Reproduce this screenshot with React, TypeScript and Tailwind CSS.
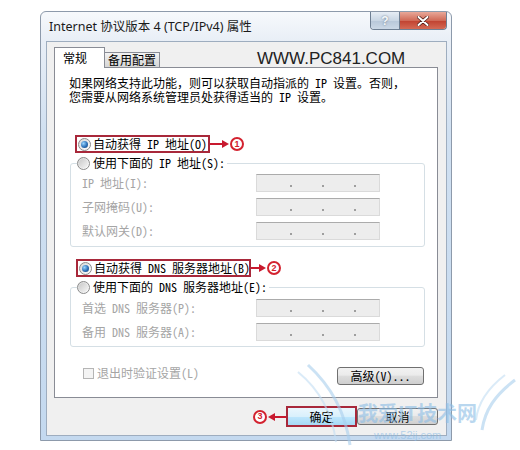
import React from "react";

function Radio({ checked }: { checked?: boolean }) {
  return (
    <span className="flex h-[13px] w-[13px] shrink-0 items-center justify-center rounded-full border border-[#8b8b8b] bg-[linear-gradient(135deg,#d6d6d6,#ffffff)]">
      {checked ? (
        <span className="h-[7px] w-[7px] rounded-full bg-[radial-gradient(circle_at_35%_35%,#9ad6ff_0%,#2c70b8_55%,#15406f_100%)]" />
      ) : (
        <span className="h-[9px] w-[9px] rounded-full bg-[linear-gradient(135deg,#c9c9c9,#f5f5f5)]" />
      )}
    </span>
  );
}

function Num({ n }: { n: string }) {
  return (
    <span className="flex h-[14px] w-[14px] shrink-0 items-center justify-center rounded-full border-2 border-[#d3222f] bg-white text-[9px] font-bold leading-none text-[#d3222f] [font-family:'Liberation_Sans',sans-serif]">
      {n}
    </span>
  );
}

function ArrowRight({ w }: { w: number }) {
  return (
    <svg width={w} height="10" viewBox={`0 0 ${w} 10`} className="shrink-0">
      <line x1="0" y1="5" x2={w - 6} y2="5" stroke="#c8192e" strokeWidth="2" />
      <polygon points={`${w - 8},1 ${w - 1},5 ${w - 8},9`} fill="#c8192e" />
    </svg>
  );
}

function ArrowLeft({ w }: { w: number }) {
  return (
    <svg width={w} height="10" viewBox={`0 0 ${w} 10`} className="shrink-0">
      <line x1="6" y1="5" x2={w} y2="5" stroke="#c8192e" strokeWidth="2" />
      <polygon points="8,1 1,5 8,9" fill="#c8192e" />
    </svg>
  );
}

function IpBox() {
  return (
    <div className="flex h-[18px] w-[124px] shrink-0 items-end gap-[30px] border border-[#dadada] border-t-[#ababab] bg-[#ededed] pb-[4px] pl-[33px]">
      <span className="h-[2px] w-[2px] bg-[#9e9e9e]" />
      <span className="h-[2px] w-[2px] bg-[#9e9e9e]" />
      <span className="h-[2px] w-[2px] bg-[#9e9e9e]" />
    </div>
  );
}

function Row({ label }: { label: string }) {
  return (
    <div className="flex h-[18px] items-center">
      <span className="w-[179px] shrink-0 whitespace-nowrap pl-[5px] text-[#a5a5a5]">{label}</span>
      <IpBox />
    </div>
  );
}

export default function App() {
  return (
    <div className="relative h-[450px] w-[520px] overflow-hidden bg-white pl-[40px] pt-[11px]">
      {/* window */}
      <div className="flex h-[430px] w-[412px] flex-col rounded-t-[6px] border border-[#8d9aab] bg-[linear-gradient(to_bottom,#f7f9fc_0px,#e8eef6_30px,#d0e0f1_120px,#c4d9ef_100%)]">
        {/* title bar */}
        <div className="flex h-[29px] shrink-0 items-start">
          <div className="flex-1 whitespace-nowrap pl-[8px] pt-[8px] text-[12.5px] leading-[14px] text-[#1a1a1a] [font-family:'Noto_Sans','Noto_Sans_CJK_SC',sans-serif]">
            Internet 协议版本 4 (TCP/IPv4) 属性
          </div>
          <div className="mr-[4px] flex h-[18px] overflow-hidden rounded-b-[4px] border border-t-0 border-[#6e7f93]">
            <div className="flex w-[28px] items-center justify-center bg-[linear-gradient(to_bottom,#e6edf5,#c9d6e4_50%,#b7c7d9_51%,#cbd8e6)] text-[12px] font-bold text-[#f4f7fa] [font-family:'Liberation_Sans',sans-serif] [text-shadow:0_0_2px_#5a6c80]">
              ?
            </div>
            <div className="flex w-[47px] items-center justify-center border-l border-[#6e7f93] bg-[linear-gradient(to_bottom,#e8a899,#d06a57_50%,#c0412f_51%,#d46a55)]">
              <svg width="12" height="10" viewBox="0 0 12 10">
                <path d="M1.5 1 L10.5 9 M10.5 1 L1.5 9" stroke="#4a1a14" strokeWidth="3.4" strokeLinecap="round" />
                <path d="M1.5 1 L10.5 9 M10.5 1 L1.5 9" stroke="#ffffff" strokeWidth="2" strokeLinecap="round" />
              </svg>
            </div>
          </div>
        </div>

        {/* client area */}
        <div className="ml-[5px] mr-[4px] flex h-[395px] flex-col border border-[#9eadbf] bg-[#f0f0f0] pl-[7px] pt-[5px] text-[12px] leading-[14px] text-black [font-family:'Noto_Sans_Mono_CJK_SC','Liberation_Serif','Noto_Sans_CJK_SC',serif]">
          {/* tabs row */}
          <div className="flex h-[20px] items-end">
            <div className="relative z-10 -mb-px flex h-[21px] w-[51px] items-start border border-b-0 border-[#898c95] bg-white pl-[8px] pt-[3px]">
              常规
            </div>
            <div className="flex h-[15px] w-[55px] items-center justify-center border border-b-0 border-l-0 border-[#898c95] bg-[linear-gradient(to_bottom,#f3f3f3,#e3e3e3_50%,#d6d6d6)]">
              备用配置
            </div>
            <div className="-mb-[2px] ml-[97px] whitespace-nowrap text-[17px] leading-[20px] text-[#222] [font-family:'Liberation_Sans',sans-serif]">
              WWW.PC841.COM
            </div>
          </div>

          {/* panel */}
          <div className="flex h-[331px] w-[384px] flex-col border border-[#898c95] bg-white">
            <div className="flex flex-col whitespace-nowrap pl-[14px] pt-[8px]">
              <span className="h-[14px]">如果网络支持此功能，则可以获取自动指派的 IP 设置。否则，</span>
              <span className="h-[14px]">您需要从网络系统管理员处获得适当的 IP 设置。</span>
            </div>

            {/* radio 1 */}
            <div className="ml-[20px] mt-[31px] flex h-[18px] items-center">
              <div className="flex h-[18px] w-[135px] items-center gap-[2px] border-2 border-[#a8283a] pl-[1px]">
                <Radio checked />
                <span className="whitespace-nowrap">自动获得 IP 地址(O)</span>
              </div>
              <ArrowRight w={20} />
              <Num n="1" />
            </div>

            {/* group 1 */}
            <fieldset className="ml-[15px] mt-[3px] w-[355px] rounded-[3px] border border-[#d5dfe5] pb-[6px] pl-[6px] pt-[4px]">
              <legend className="flex h-[14px] items-center gap-[3px] bg-white pr-[2px]">
                <Radio />
                <span className="whitespace-nowrap">使用下面的 IP 地址(S):</span>
              </legend>
              <div className="flex flex-col gap-[6px]">
                <Row label="IP 地址(I):" />
                <Row label="子网掩码(U):" />
                <Row label="默认网关(D):" />
              </div>
            </fieldset>

            {/* radio 3 */}
            <div className="ml-[21px] mt-[12px] flex h-[18px] items-center">
              <div className="flex h-[18px] w-[175px] items-center gap-[2px] border-2 border-[#a8283a] pl-[1px]">
                <Radio checked />
                <span className="whitespace-nowrap">自动获得 DNS 服务器地址(B)</span>
              </div>
              <ArrowRight w={16} />
              <Num n="2" />
            </div>

            {/* group 2 */}
            <fieldset className="ml-[15px] mt-[3px] w-[355px] rounded-[3px] border border-[#d5dfe5] pb-[5px] pl-[6px] pt-[5px]">
              <legend className="flex h-[14px] items-center gap-[3px] bg-white pr-[2px]">
                <Radio />
                <span className="whitespace-nowrap">使用下面的 DNS 服务器地址(E):</span>
              </legend>
              <div className="flex flex-col gap-[6px]">
                <Row label="首选 DNS 服务器(P):" />
                <Row label="备用 DNS 服务器(A):" />
              </div>
            </fieldset>

            {/* bottom row */}
            <div className="mt-[20px] flex items-start justify-between pl-[28px] pr-[13px]">
              <div className="flex h-[12px] items-center gap-[3px] text-[#a5a5a5]">
                <span className="h-[11px] w-[11px] shrink-0 border border-[#b5b5b5] bg-[#f4f4f4]" />
                <span className="whitespace-nowrap">退出时验证设置(L)</span>
              </div>
              <div className="flex h-[18px] w-[87px] items-center justify-center whitespace-nowrap rounded-[3px] border border-[#707070] bg-[linear-gradient(to_bottom,#f2f2f2,#ebebeb_45%,#dddddd_50%,#cfcfcf)]">
                高级(V)...
              </div>
            </div>
          </div>

          {/* dialog buttons */}
          <div className="mt-[8px] flex items-center justify-end pr-[8px]">
            <Num n="3" />
            <ArrowLeft w={19} />
            <div className="h-[21px] w-[71px] border-2 border-[#a8283a]">
              <div className="flex h-full w-full items-center justify-center bg-[linear-gradient(to_bottom,#eaf6fd,#d9f0fc_50%,#bee6fd_51%,#a7d9f5)]">
                确定
              </div>
            </div>
            <div className="flex h-[17px] w-[81px] items-center justify-center rounded-[3px] border border-[#707070] bg-[linear-gradient(to_bottom,#f2f2f2,#ebebeb_45%,#dddddd_50%,#cfcfcf)]">
              取消
            </div>
          </div>
        </div>
      </div>

      {/* watermark overlay */}
      <div className="pointer-events-none absolute left-[290px] top-[350px] h-[100px] w-[230px] opacity-60">
        <svg width="230" height="100" viewBox="0 0 230 100" className="absolute left-0 top-0">
          <path d="M18 15 C40 35, 55 60, 60 95" stroke="#a9cfee" strokeWidth="3" fill="none" />
          <path d="M8 22 C30 40, 42 62, 46 92" stroke="#c3def4" strokeWidth="2" fill="none" />
          <path d="M225 30 C205 45, 195 60, 192 80" stroke="#a9cfee" strokeWidth="3" fill="none" />
          <path d="M215 25 C198 38, 188 52, 186 70" stroke="#c3def4" strokeWidth="2" fill="none" />
        </svg>
        <div className="absolute left-[68px] top-[53px] whitespace-nowrap text-[20px] font-bold leading-[20px] text-[#8cbde6] [font-family:'Noto_Sans_CJK_SC',sans-serif]">
          我爱IT技术网
        </div>
        <div className="absolute left-[84px] top-[79px] whitespace-nowrap text-[11px] leading-[12px] text-[#8cbde6] [font-family:'Liberation_Sans',sans-serif]">
          www.52ij.com
        </div>
      </div>
    </div>
  );
}
